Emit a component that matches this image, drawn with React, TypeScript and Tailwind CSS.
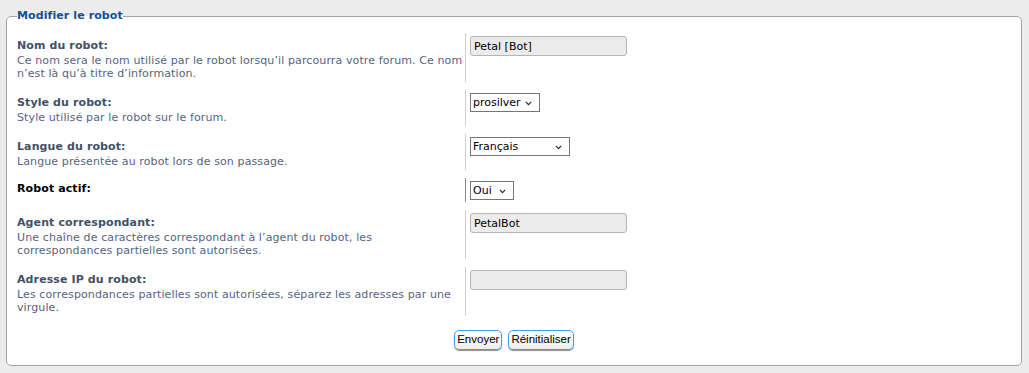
import { ReactNode } from "react";

interface Row {
  label: string;
  lines: string[];
  strong?: boolean;
  field: ReactNode;
  dark?: boolean;
}

const TextInput = ({ value }: { value: string }) => (
  <input
    type="text"
    defaultValue={value}
    className="block w-[157px] h-[20px] px-[3px] bg-[#ebebeb] border border-[#b5b5b5] rounded-[3px] text-[11px] text-black outline-none"
  />
);

const Select = ({ value, className }: { value: string; className: string }) => (
  <span className={`relative flex items-center h-[19px] border border-[#767676] bg-white ${className}`}>
    <span className="pl-[2px] text-[11px] text-black leading-none">{value}</span>
    <svg
      className="absolute right-[7px] top-[7px]"
      width="7"
      height="5"
      viewBox="0 0 7 5"
      fill="none"
    >
      <path d="M0.8 0.8 L3.5 3.6 L6.2 0.8" stroke="#222" strokeWidth="1.1" />
    </svg>
  </span>
);

const rows: Row[] = [
  {
    label: "Nom du robot:",
    lines: [
      "Ce nom sera le nom utilisé par le robot lorsqu’il parcourra votre forum. Ce nom",
      "n’est là qu’à titre d’information.",
    ],
    field: <TextInput value="Petal [Bot]" />,
  },
  {
    label: "Style du robot:",
    lines: ["Style utilisé par le robot sur le forum."],
    field: <Select value="prosilver" className="w-[70px]" />,
  },
  {
    label: "Langue du robot:",
    lines: ["Langue présentée au robot lors de son passage."],
    field: <Select value="Français" className="w-[100px]" />,
  },
  {
    label: "Robot actif:",
    lines: [],
    strong: true,
    dark: true,
    field: <Select value="Oui" className="w-[44px]" />,
  },
  {
    label: "Agent correspondant:",
    lines: [
      "Une chaîne de caractères correspondant à l’agent du robot, les",
      "correspondances partielles sont autorisées.",
    ],
    field: <TextInput value="PetalBot" />,
  },
  {
    label: "Adresse IP du robot:",
    lines: [
      "Les correspondances partielles sont autorisées, séparez les adresses par une",
      "virgule.",
    ],
    field: <TextInput value="" />,
  },
];

export default function App() {
  return (
    <div
      className="w-[1029px] h-[373px] bg-[#ececec] pt-[9px]"
      style={{ fontFamily: '"DejaVu Sans", Verdana, sans-serif' }}
    >
      <fieldset className="ml-[6px] w-[1016px] h-[357px] border border-[#a3a3a3] rounded-[5px] bg-white px-[10px]">
        <legend className="text-[11px] font-bold leading-[14px] text-[#115098] tracking-[0.1px]">
          Modifier le robot
        </legend>
        <div className="pt-[10px]">
          {rows.map((row, index) => (
            <div key={index} className="flex mb-[8px]">
              <div
                className={`w-[449px] shrink-0 border-r whitespace-nowrap tracking-[0.11px] ${
                  row.dark
                    ? "border-[#8a8a8a] pt-[3px] pb-[5px]"
                    : "border-[#cfcfcf] pt-[5px] pb-[2px]"
                }`}
              >
                <div
                  className={`text-[11px] font-bold leading-[16px] ${
                    row.strong ? "text-black" : "text-[#425067]"
                  }`}
                >
                  {row.label}
                </div>
                {row.lines.map((line, i) => (
                  <div key={i} className="text-[11px] leading-[13px] text-[#536482]">
                    {line}
                  </div>
                ))}
              </div>
              <div className="flex items-start pl-[4px] pt-[3px]">{row.field}</div>
            </div>
          ))}
        </div>
        <div className="flex justify-center gap-[6px] pt-[6px]">
          <button
            className="h-[20px] px-[2px] rounded-[5px] border border-[#3aa3e3] bg-gradient-to-b from-white to-[#ededed] shadow-[0_1px_1px_rgba(0,0,0,0.45)] text-[11.5px] text-black"
            style={{ fontFamily: '"Liberation Sans", Arial, sans-serif' }}
          >
            Envoyer
          </button>
          <button
            className="h-[20px] px-[2px] rounded-[5px] border border-[#3aa3e3] bg-gradient-to-b from-white to-[#ededed] shadow-[0_1px_1px_rgba(0,0,0,0.45)] text-[11.5px] text-black"
            style={{ fontFamily: '"Liberation Sans", Arial, sans-serif' }}
          >
            Réinitialiser
          </button>
        </div>
      </fieldset>
    </div>
  );
}
